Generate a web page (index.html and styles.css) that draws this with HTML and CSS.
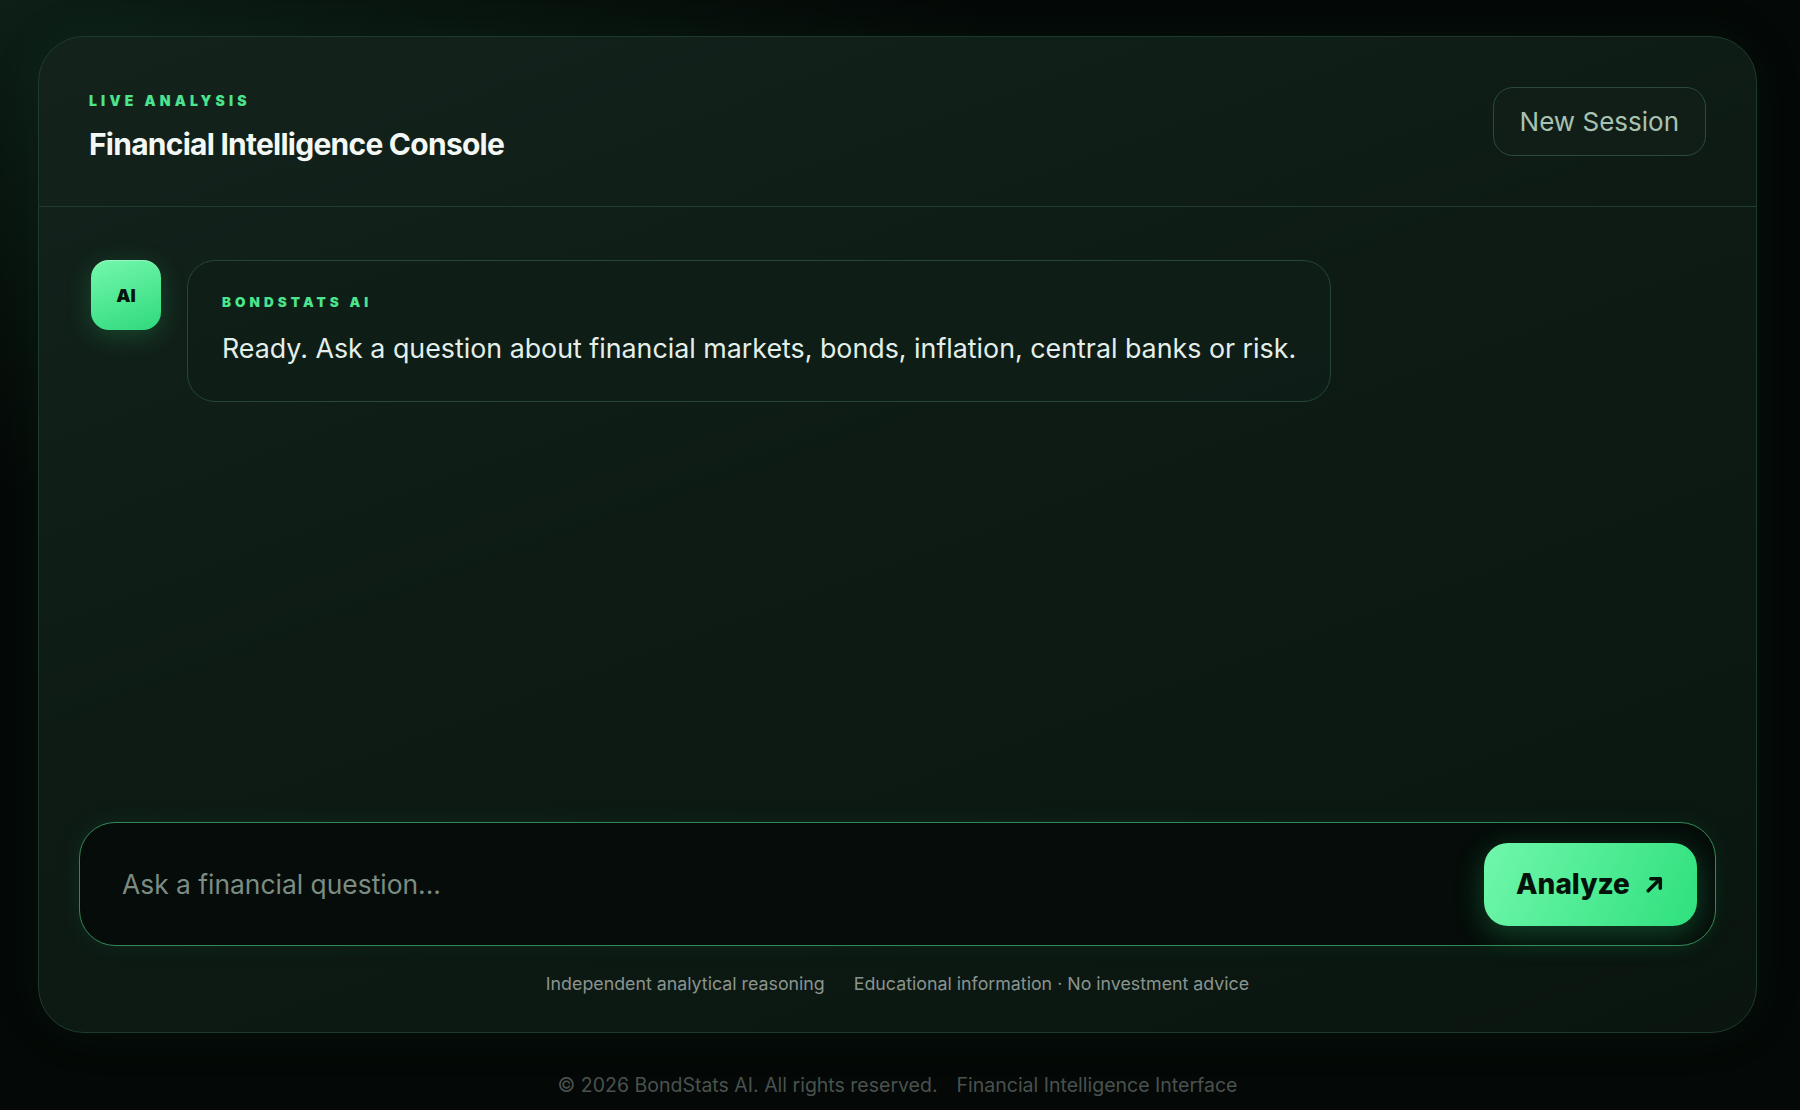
FILE: index.html
```html
<!DOCTYPE html>
<html lang="en">
<head>
  <meta charset="UTF-8">
  <title>BondStats AI - Financial Intelligence Console</title>
  <link rel="stylesheet" href="styles.css">
</head>
<body>
<div class="page">
  <div class="console">
    <div class="console-header">
      <div class="header-text">
        <div class="eyebrow">Live Analysis</div>
        <h1 class="title">Financial Intelligence Console</h1>
      </div>
      <button class="session-btn" onclick="newSession()">New Session</button>
    </div>

    <!-- conversation -->
    <div class="chat" id="chat">
      <div class="message">
        <div class="avatar">AI</div>
        <div class="bubble">
          <div class="bubble-label">BondStats AI</div>
          <p class="bubble-text">Ready. Ask a question about financial markets, bonds, inflation, central banks or risk.</p>
        </div>
      </div>
    </div>

    <!-- input -->
    <div class="composer">
      <form class="ask-form" onsubmit="return false;">
        <input type="text" class="ask-input" placeholder="Ask a financial question...">
        <button type="submit" class="analyze-btn">
          Analyze
          <svg class="arrow" viewBox="0 0 20 20" width="21" height="21">
            <path d="M4 16 L15 5" />
            <path d="M6.5 4.5 H15.5 V13.5" />
          </svg>
        </button>
      </form>
      <div class="notes">
        <span>Independent analytical reasoning</span>
        <span>Educational information · No investment advice</span>
      </div>
    </div>
  </div>

  <div class="footer">
    <span>© 2026 BondStats AI. All rights reserved.</span>
    <span>Financial Intelligence Interface</span>
  </div>
</div>

<script>
  function newSession() {
    document.querySelector('.ask-input').value = '';
  }
</script>
</body>
</html>
```

FILE: styles.css
```css
body {
  margin: 0;
  height: 100vh;
  overflow: hidden;
  font-family: Inter, "Liberation Sans", sans-serif;
  background:
    radial-gradient(ellipse 55% 45% at 0% 0%, #0d1f16 0%, rgba(8, 16, 12, 0) 100%),
    #040806;
  color: #e4efe9;
}

.page {
  padding: 36px 43px 0 38px;
}

.console {
  height: 997px;
  box-sizing: border-box;
  display: flex;
  flex-direction: column;
  border: 1px solid #1d3b2d;
  border-radius: 46px;
  background: linear-gradient(160deg, #13231c 0%, #0e1b15 45%, #0a150f 100%);
  box-shadow: 0 0 50px rgba(30, 110, 65, 0.10);
}

.console-header {
  height: 170px;
  box-sizing: border-box;
  padding: 12px 50px 0;
  display: flex;
  align-items: center;
  justify-content: space-between;
  border-bottom: 1px solid #1f3d2f;
}

.console-header .session-btn {
  margin-top: -12px;
}

.eyebrow,
.bubble-label {
  font-size: 14px;
  line-height: 16px;
  font-weight: 900;
  letter-spacing: 0.3em;
  text-transform: uppercase;
  color: #4de48e;
}

.title {
  margin: 17px 0 0;
  font-size: 30px;
  line-height: 36px;
  font-weight: 700;
  letter-spacing: -0.025em;
  color: #f3f8f5;
}

.session-btn {
  height: 69px;
  padding: 0 26px;
  border: 1px solid #2a4b3b;
  border-radius: 20px;
  background: #111e18;
  color: #a8c2b2;
  font-family: inherit;
  font-size: 26px;
  cursor: pointer;
}

.chat {
  flex: 1;
  padding: 53px 52px 0;
}

.message {
  display: flex;
  align-items: flex-start;
  gap: 26px;
}

.avatar {
  width: 70px;
  height: 70px;
  flex-shrink: 0;
  border-radius: 18px;
  background: linear-gradient(160deg, #74f8ad 0%, #2fd97c 100%);
  color: #06140c;
  font-size: 18px;
  font-weight: 900;
  display: flex;
  align-items: center;
  justify-content: center;
  box-shadow: 0 6px 26px rgba(50, 220, 120, 0.22), inset 0 1px 0 rgba(255, 255, 255, 0.3);
}

.bubble {
  border: 1px solid #24473a;
  border-radius: 28px;
  background: rgba(14, 30, 23, 0.7);
  padding: 33px 34px 35px;
}

.bubble-label {
  font-size: 13.5px;
}

.bubble-text {
  margin: 21px 0 0;
  font-size: 26.8px;
  line-height: 35px;
  color: #e4efe9;
}

.composer {
  padding: 0 40px 37px;
}

.ask-form {
  height: 124px;
  box-sizing: border-box;
  display: flex;
  align-items: center;
  padding: 0 18px 0 40px;
  border: 1.5px solid #338858;
  border-radius: 36px;
  background: #050c09;
  box-shadow: 0 0 26px rgba(40, 200, 110, 0.08);
}

.ask-input {
  flex: 1;
  min-width: 0;
  border: none;
  outline: none;
  background: transparent;
  font-family: inherit;
  font-size: 26.4px;
  color: #e4efe9;
}

.ask-input::placeholder {
  color: #7c8c83;
}

.analyze-btn {
  width: 213px;
  height: 83px;
  border: none;
  border-radius: 24px;
  background: linear-gradient(115deg, #70f7ac 0%, #2fe07d 100%);
  color: #04120a;
  font-family: inherit;
  font-size: 28px;
  font-weight: 800;
  display: flex;
  align-items: center;
  justify-content: center;
  gap: 14px;
  cursor: pointer;
  box-shadow: 0 8px 30px rgba(46, 224, 125, 0.28);
}

.arrow path {
  fill: none;
  stroke: #04120a;
  stroke-width: 3.4;
  stroke-linecap: round;
  stroke-linejoin: round;
}

.notes {
  margin-top: 26px;
  display: flex;
  justify-content: center;
  gap: 29px;
  font-size: 17.8px;
  line-height: 23px;
  color: #8a948f;
}

.footer {
  margin-top: 39px;
  display: flex;
  justify-content: center;
  gap: 19px;
  font-size: 19.5px;
  line-height: 26px;
  color: #4a524e;
}
```
